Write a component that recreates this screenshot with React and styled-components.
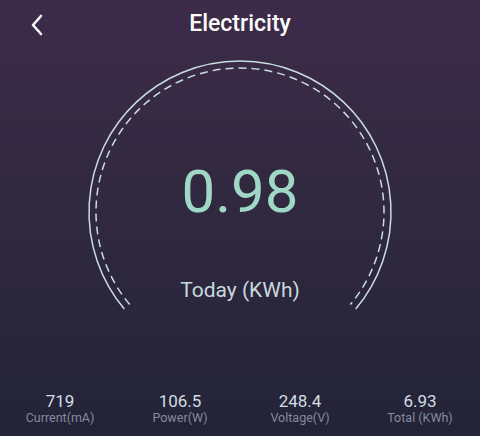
import React from "react";
import styled, { createGlobalStyle } from "styled-components";

const GlobalStyle = createGlobalStyle`
  html, body {
    margin: 0;
    padding: 0;
    background: #232338;
  }
  * { box-sizing: border-box; }
`;

const Screen = styled.div`
  width: 480px;
  height: 436px;
  display: flex;
  flex-direction: column;
  background: linear-gradient(180deg, #3d2b49 0%, #312940 45%, #232338 100%);
  font-family: Roboto, "Noto Sans", sans-serif;
  overflow: hidden;
`;

const Header = styled.div`
  height: 48px;
  display: grid;
  grid-template-columns: 80px 1fr 80px;
  align-items: center;
`;

const BackButton = styled.div`
  display: flex;
  align-items: center;
  justify-content: flex-start;
  padding-left: 30px;
  padding-top: 2px;
  height: 48px;
`;

const Title = styled.div`
  text-align: center;
  color: #ffffff;
  font-size: 23px;
  font-weight: 500;
  line-height: 48px;
`;

const Gauge = styled.div`
  position: relative;
  width: 310px;
  height: 260px;
  margin: 10px auto 0;
  display: flex;
  flex-direction: column;
  align-items: center;
  padding-top: 104px;
`;

const Dial = styled.svg`
  position: absolute;
  left: 0;
  top: 0;
`;

const Reading = styled.div`
  position: relative;
  font-size: 60px;
  line-height: 60px;
  font-weight: 400;
  color: #9fd8c6;
`;

const Unit = styled.div`
  position: relative;
  margin-top: 58px;
  font-size: 21px;
  line-height: 21px;
  color: #c6d9dc;
`;

const Stats = styled.div`
  margin-top: auto;
  padding-bottom: 12px;
  display: grid;
  grid-template-columns: repeat(4, 1fr);
`;

const Stat = styled.div`
  display: flex;
  flex-direction: column;
  align-items: center;
  gap: 1px;
`;

const StatValue = styled.div`
  font-size: 17px;
  line-height: 17px;
  color: #d3dee2;
`;

const StatLabel = styled.div`
  font-size: 12.5px;
  line-height: 13px;
  color: #858b9c;
`;

const stats = [
  { value: "719", label: "Current(mA)" },
  { value: "106.5", label: "Power(W)" },
  { value: "248.4", label: "Voltage(V)" },
  { value: "6.93", label: "Total (KWh)" },
];

const arc = (cx, cy, r, deg) => {
  const a = (deg * Math.PI) / 180;
  const dx = r * Math.cos(a);
  const dy = r * Math.sin(a);
  return `M ${cx - dx} ${cy + dy} A ${r} ${r} 0 1 1 ${cx + dx} ${cy + dy}`;
};

const App = () => {
  return (
    <Screen>
      <GlobalStyle />
      <Header>
        <BackButton>
          <svg width="14" height="22" viewBox="0 0 14 22">
            <path d="M11 2 L3 11 L11 20" fill="none" stroke="#ffffff" strokeWidth="2.6" strokeLinecap="round" strokeLinejoin="round" />
          </svg>
        </BackButton>
        <Title>Electricity</Title>
        <div />
      </Header>
      <Gauge>
        <Dial width="310" height="260" viewBox="0 0 310 260">
          <path d={arc(155, 154, 151, 40)} fill="none" stroke="#c9dde0" strokeWidth="1.5" />
          <path d={arc(155, 154, 144, 40)} fill="none" stroke="#c9dde0" strokeWidth="1.5" strokeDasharray="8 5" />
        </Dial>
        <Reading>0.98</Reading>
        <Unit>Today (KWh)</Unit>
      </Gauge>
      <Stats>
        {stats.map((s) => (
          <Stat key={s.label}>
            <StatValue>{s.value}</StatValue>
            <StatLabel>{s.label}</StatLabel>
          </Stat>
        ))}
      </Stats>
    </Screen>
  );
};

export default App;
